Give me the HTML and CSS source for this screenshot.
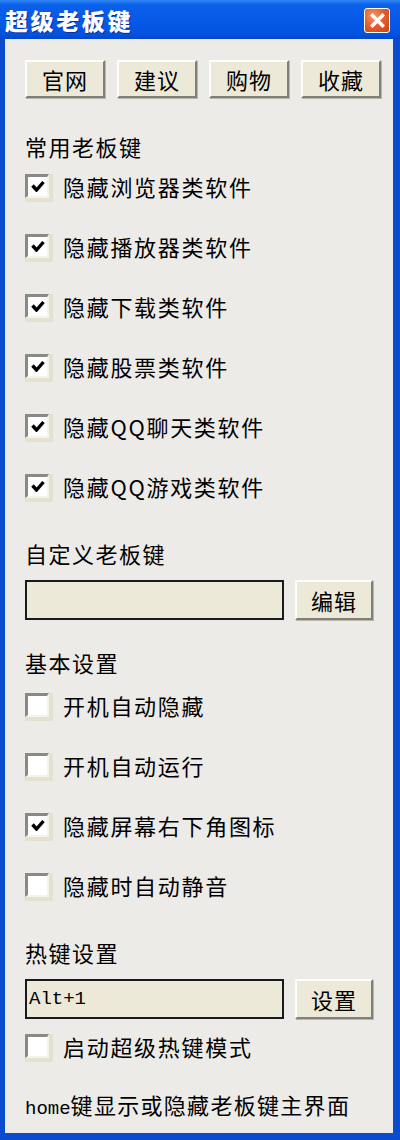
FILE: index.html
```html
<!DOCTYPE html>
<html>
<head>
<meta charset="utf-8">
<link rel="stylesheet" href="styles.css">
</head>
<body>
<div class="window">
  <div class="titlebar">
    <span class="title">超级老板键</span>
    <span class="close">
      <svg width="15" height="15" viewBox="0 0 15 15"><path d="M2.5 2.5 L12.5 12.5 M12.5 2.5 L2.5 12.5" stroke="#fff" stroke-width="3.6" stroke-linecap="square"/></svg>
    </span>
  </div>
  <div class="content">
    <div class="toolbar">
      <button class="btn">官网</button>
      <button class="btn">建议</button>
      <button class="btn">购物</button>
      <button class="btn">收藏</button>
    </div>

    <div class="label first">常用老板键</div>
    <div class="list">
      <div class="row"><span class="cb on"></span><span class="txt">隐藏浏览器类软件</span></div>
      <div class="row"><span class="cb on"></span><span class="txt">隐藏播放器类软件</span></div>
      <div class="row"><span class="cb on"></span><span class="txt">隐藏下载类软件</span></div>
      <div class="row"><span class="cb on"></span><span class="txt">隐藏股票类软件</span></div>
      <div class="row"><span class="cb on"></span><span class="txt">隐藏QQ聊天类软件</span></div>
      <div class="row"><span class="cb on"></span><span class="txt">隐藏QQ游戏类软件</span></div>
    </div>

    <div class="label">自定义老板键</div>
    <div class="inputrow">
      <div class="field"></div>
      <button class="btn small">编辑</button>
    </div>

    <div class="label">基本设置</div>
    <div class="list basic">
      <div class="row"><span class="cb"></span><span class="txt">开机自动隐藏</span></div>
      <div class="row"><span class="cb"></span><span class="txt">开机自动运行</span></div>
      <div class="row"><span class="cb on"></span><span class="txt">隐藏屏幕右下角图标</span></div>
      <div class="row"><span class="cb"></span><span class="txt">隐藏时自动静音</span></div>
    </div>

    <div class="label">热键设置</div>
    <div class="inputrow">
      <div class="field"><span class="mono">Alt+1</span></div>
      <button class="btn small">设置</button>
    </div>
    <div class="row single"><span class="cb"></span><span class="txt">启动超级热键模式</span></div>

    <div class="note"><span class="mono">home</span>键显示或隐藏老板键主界面</div>
  </div>
</div>
</body>
</html>
```

FILE: styles.css
```css
* { box-sizing: border-box; }
html, body { margin: 0; padding: 0; }
body {
  width: 400px;
  height: 1140px;
  background: #0a4fd8;
  font-family: "Noto Sans CJK SC", "Noto Sans", sans-serif;
  color: #000;
}
.window {
  width: 400px;
  height: 1140px;
  display: flex;
  flex-direction: column;
}
.titlebar {
  height: 39px;
  flex: none;
  background: linear-gradient(#2f86f4 0%, #0b60ea 12%, #0558e6 60%, #0452e0 88%, #0347c8 100%);
  display: flex;
  align-items: center;
  justify-content: space-between;
  padding: 0 10px 0 5px;
}
.title {
  color: #fff;
  font-size: 23px;
  font-weight: 900;
  letter-spacing: 2.6px;
  line-height: 1;
  text-shadow: 1px 1px 0 #0a2f9a;
  margin-top: 1px;
}
.close {
  width: 26px;
  height: 25px;
  border: 1.5px solid #fff;
  border-radius: 3px;
  background: radial-gradient(circle at 35% 30%, #f39a70 0%, #e4602f 45%, #c8420f 100%);
  display: flex;
  align-items: center;
  justify-content: center;
  margin-top: 2px;
}
.content {
  flex: 1;
  background: #ecebe8;
  border-left: 5px solid #0a4bd0;
  border-right: 7px solid #0a4bd0;
  border-bottom: 7px solid #0a4bd0;
  padding: 21px 0 0 20px;
  display: flex;
  flex-direction: column;
}
.toolbar {
  display: flex;
  gap: 12px;
}
.btn {
  font-family: "Noto Sans CJK SC", sans-serif;
  font-size: 22px;
  line-height: 1;
  color: #000;
  width: 80px;
  height: 38px;
  padding: 0;
  background: #ece9d8;
  border-top: 2px solid #fdfdfa;
  border-left: 2px solid #fdfdfa;
  border-right: 2px solid #808078;
  border-bottom: 2px solid #808078;
  box-shadow: 1px 1px 0 #b9b7ad;
  letter-spacing: 1px;
}
.btn.small {
  width: 78px;
  height: 40px;
}
.label {
  height: 30px;
  line-height: 30px;
  font-size: 22px;
  letter-spacing: 1.5px;
  margin-top: 27px;
}
.label.first { margin-top: 33px; }
.list {
  display: flex;
  flex-direction: column;
  gap: 10px;
}
.list.basic { margin-top: 3px; }
.row {
  height: 50px;
  display: flex;
  align-items: center;
}
.cb {
  width: 24px;
  height: 24px;
  flex: none;
  background: #fff;
  border-top: 3px solid #8a8983;
  border-left: 3px solid #8a8983;
  border-right: 2px solid #f4f3ee;
  border-bottom: 2px solid #f4f3ee;
  box-shadow: 2px 2px 0 2px #e4e1cf;
  position: relative;
}
.cb.on::after {
  content: "";
  position: absolute;
  left: 3px;
  top: 3px;
  width: 14px;
  height: 12px;
  background: no-repeat center/contain url("data:image/svg+xml;utf8,<svg xmlns='http://www.w3.org/2000/svg' viewBox='0 0 14 12'><path d='M1.5 5.5 L5.5 10 L12.5 2' fill='none' stroke='black' stroke-width='3.4'/></svg>");
}
.txt {
  margin-left: 14px;
  font-size: 22px;
  letter-spacing: 1.7px;
  line-height: 1;
}
.inputrow {
  margin-top: 12px;
  display: flex;
  gap: 11px;
  height: 40px;
}
.field {
  width: 259px;
  height: 40px;
  background: #ece9d8;
  border: 2px solid #1a1a1a;
  display: flex;
  align-items: center;
  padding-left: 2px;
}
.mono {
  font-family: "Liberation Mono", "DejaVu Sans Mono", monospace;
  font-size: 19px;
  letter-spacing: 0;
}
.row.single { margin-top: 2px; }
.note {
  margin-top: 18px;
  height: 30px;
  line-height: 30px;
  font-size: 22px;
  letter-spacing: 1.3px;
  white-space: nowrap;
}
```
